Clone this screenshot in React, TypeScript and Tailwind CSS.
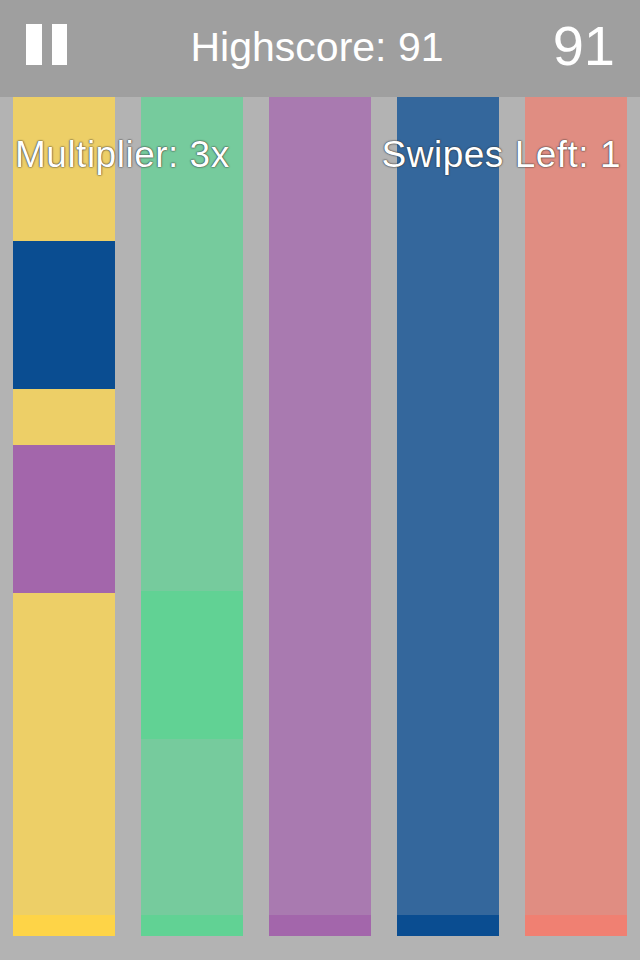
type Block = { h: number; color: string };

const columns: { blocks: Block[]; strip: string }[] = [
  {
    blocks: [
      { h: 144, color: "bg-[#edcf67]" },
      { h: 148, color: "bg-[#0a4d91]" },
      { h: 56, color: "bg-[#edcf67]" },
      { h: 148, color: "bg-[#a366ab]" },
      { h: 322, color: "bg-[#edcf67]" },
    ],
    strip: "bg-[#fed447]",
  },
  {
    blocks: [
      { h: 494, color: "bg-[#76cb9d]" },
      { h: 148, color: "bg-[#61d294]" },
      { h: 176, color: "bg-[#76cb9d]" },
    ],
    strip: "bg-[#61d294]",
  },
  { blocks: [{ h: 818, color: "bg-[#a97ab0]" }], strip: "bg-[#a366ab]" },
  { blocks: [{ h: 818, color: "bg-[#34679c]" }], strip: "bg-[#0a4d91]" },
  { blocks: [{ h: 818, color: "bg-[#e08d82]" }], strip: "bg-[#f08072]" },
];

const font = { fontFamily: '"Liberation Sans", Arial, sans-serif' };

export default function App() {
  return (
    <div className="flex h-[960px] w-[640px] flex-col overflow-hidden bg-[#b3b3b3]" style={font}>
      {/* top bar */}
      <header className="relative flex h-[97px] shrink-0 items-start bg-[#9f9f9f] text-white">
        <div className="ml-[26px] mt-[24px] flex gap-[10px]">
          <span className="block h-[41px] w-[16px] bg-white" />
          <span className="block h-[41px] w-[15px] bg-white" />
        </div>
        <div className="absolute left-0 right-0 top-[27px] text-center text-[41px] leading-none">
          <span className="relative -left-[3px]">Highscore: 91</span>
        </div>
        <div className="ml-auto mr-[25px] mt-[18px] text-[56px] leading-none">91</div>
      </header>

      {/* board */}
      <main className="relative flex flex-1 gap-[26px] px-[13px] pb-[24px]">
        {columns.map((col, i) => (
          <div key={i} className="flex flex-1 flex-col">
            {col.blocks.map((b, j) => (
              <div key={j} className={b.color} style={{ height: b.h }} />
            ))}
            <div className={`h-[21px] ${col.strip}`} />
          </div>
        ))}

        <div className="absolute left-[15px] right-[19px] top-[39px] flex justify-between text-[37px] leading-none tracking-[0.5px] text-white [text-shadow:0_0_2px_rgba(50,50,50,1),0_0_1px_rgba(50,50,50,1)]">
          <span>Multiplier: 3x</span>
          <span>Swipes Left: 1</span>
        </div>
      </main>
    </div>
  );
}
